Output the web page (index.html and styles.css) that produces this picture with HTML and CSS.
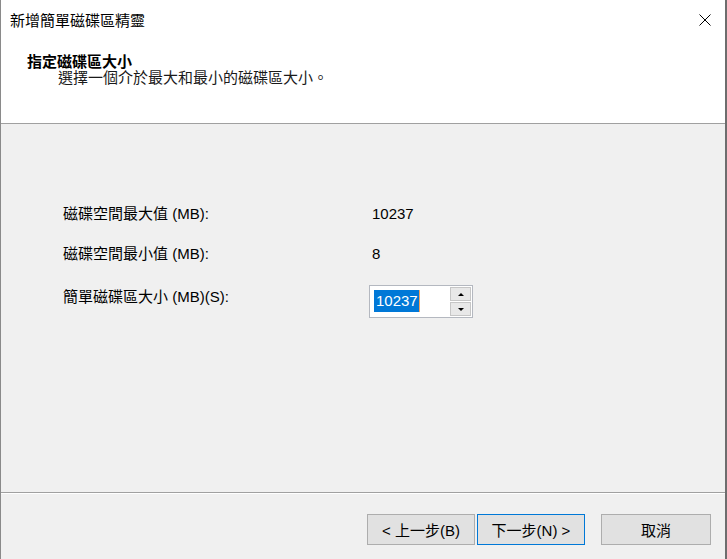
FILE: index.html
```html
<!DOCTYPE html>
<html lang="zh-Hant">
<head>
    <meta charset="UTF-8">
    <meta name="viewport" content="width=device-width, initial-scale=1.0">
    <title>新增簡單磁碟區精靈</title>
    <link rel="stylesheet" href="styles.css">
</head>
<body>
    <div class="window">
        <div class="titlebar">
            <span class="title">新增簡單磁碟區精靈</span>
            <button class="close" title="關閉">
                <svg width="12" height="12" viewBox="0 0 12 12">
                    <path d="M0.5 0.5 L11.5 11.5 M11.5 0.5 L0.5 11.5" stroke="#000" stroke-width="1" fill="none"/>
                </svg>
            </button>
        </div>
        <div class="header">
            <div class="header-title">指定磁碟區大小</div>
            <div class="header-sub">選擇一個介於最大和最小的磁碟區大小。</div>
        </div>
        <div class="content">
            <div class="row">
                <span class="label">磁碟空間最大值 (MB):</span>
                <span class="value">10237</span>
            </div>
            <div class="row">
                <span class="label">磁碟空間最小值 (MB):</span>
                <span class="value">8</span>
            </div>
            <div class="row row-spin">
                <span class="label">簡單磁碟區大小 (MB)(S):</span>
                <div class="spin">
                    <div class="spin-input"><span class="selected">10237</span></div>
                    <div class="spin-btns">
                        <button class="spin-btn"><span class="tri-up"></span></button>
                        <button class="spin-btn"><span class="tri-down"></span></button>
                    </div>
                </div>
            </div>
        </div>
        <div class="footer">
            <button class="btn">&lt; 上一步(B)</button>
            <button class="btn btn-default">下一步(N) &gt;</button>
            <button class="btn btn-cancel">取消</button>
        </div>
    </div>
</body>
</html>
```
FILE: styles.css
```css
body {
    margin: 0;
    padding: 0;
    background-color: #6d6d6d;
    font-family: "Liberation Sans", "Noto Sans CJK TC", sans-serif;
    font-size: 15px;
    color: #000;
}
.window {
    width: 724px;
    height: 559px;
    border-left: 1px solid #8a8a8a;
    border-right: 2px solid #6d6d6d;
    display: flex;
    flex-direction: column;
    background: #fff;
}
.titlebar {
    height: 42px;
    display: flex;
    align-items: center;
    justify-content: space-between;
    padding: 0 14px 0 9px;
}
.title {
    line-height: 20px;
    margin-top: -1px;
}
.close {
    border: none;
    background: none;
    padding: 0;
    width: 12px;
    height: 12px;
    margin-top: -2px;
}
.close svg {
    display: block;
}
.header {
    height: 82px;
    box-sizing: border-box;
    padding: 11px 0 0 26px;
    border-bottom: 1px solid #a0a0a0;
}
.header-title {
    font-weight: bold;
    line-height: 17px;
}
.header-sub {
    line-height: 16px;
    padding-left: 31px;
    color: #1a1a1a;
}
.content {
    flex: 1;
    background: #f0f0f0;
    padding: 80px 0 0 62px;
}
.row {
    display: flex;
    line-height: 20px;
    margin-bottom: 20px;
}
.row-spin {
    margin-top: 21px;
}
.label {
    width: 306px;
}
.row-spin .label {
    padding-top: 2px;
}
.value {
    padding-left: 3px;
}
.spin {
    width: 102px;
    height: 31px;
    display: flex;
    border: 1px solid #b4b8c0;
    background: #fff;
}
.spin-input {
    flex: 1;
    padding: 4px 0 0 4px;
    border-right: 1px solid #fff;
}
.selected {
    display: inline-block;
    background: #0078d7;
    color: #fff;
    height: 22px;
    line-height: 22px;
    padding: 0 1px 0 2px;
    border-right: 1px solid #f7a35c;
}
.spin-btns {
    width: 21px;
    display: flex;
    flex-direction: column;
    gap: 1px;
    padding: 1px 1px 1px 0;
}
.spin-btn {
    flex: 1;
    padding: 0;
    border: 1px solid #c6c6c6;
    background: #e8e8e8;
    display: flex;
    align-items: center;
    justify-content: center;
}
.tri-up {
    width: 0;
    height: 0;
    border-left: 3px solid transparent;
    border-right: 3px solid transparent;
    border-bottom: 3px solid #000;
}
.tri-down {
    width: 0;
    height: 0;
    border-left: 3px solid transparent;
    border-right: 3px solid transparent;
    border-top: 3px solid #000;
}
.footer {
    height: 67px;
    box-sizing: border-box;
    background: #f0f0f0;
    border-top: 1px solid #a0a0a0;
    box-shadow: inset 0 1px 0 #fff;
    display: flex;
    justify-content: flex-end;
    align-items: flex-start;
    padding: 21px 14px 0 0;
    gap: 2px;
}
.btn {
    width: 108px;
    height: 31px;
    font-family: "Liberation Sans", "Noto Sans CJK TC", sans-serif;
    font-size: 15px;
    color: #000;
    background: #e1e1e1;
    border: 1px solid #adadad;
    padding: 0;
}
.btn-default {
    border: 1px solid #0078d7;
    box-shadow: inset 0 0 0 1px #e1e1e1;
}
.btn-cancel {
    width: 110px;
    margin-left: 14px;
}
```
